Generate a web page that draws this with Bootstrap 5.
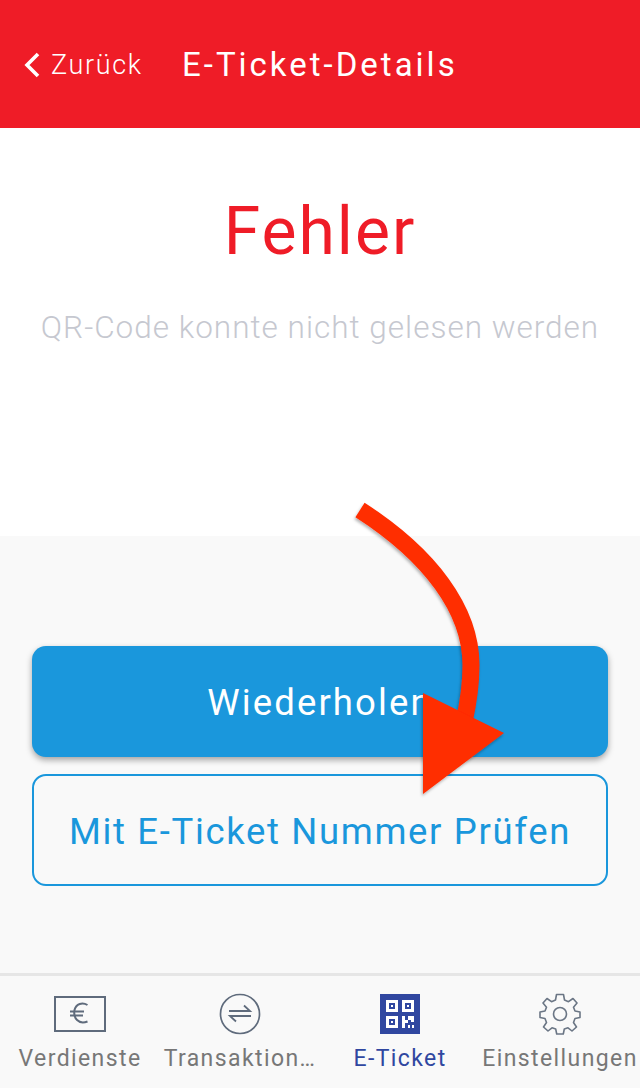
<!DOCTYPE html>
<html lang="de">
  <head>
    <meta charset="UTF-8" />
    <meta name="viewport" content="width=device-width, initial-scale=1.0" />
    <title>E-Ticket-Details</title>
    <link href="https://cdn.jsdelivr.net/npm/bootstrap@5.3.0/dist/css/bootstrap.min.css" rel="stylesheet" />
    <style>
      html, body { height: 100%; }
      body { font-family: Roboto, "Liberation Sans", sans-serif; background: #fff; overflow: hidden; }
      .app-screen { width: 640px; height: 1088px; }
      .top-bar { height: 128px; background: #ef1c27; color: #fff; padding-left: 23px; padding-top: 2px; }
      .back-link { font-size: 27px; letter-spacing: 1.65px; color: #fff; text-decoration: none; width: 159px; font-weight: 300; gap: 9px; }
      .bar-title { font-size: 33px; letter-spacing: 3px; font-weight: 400; }
      .msg-area { height: 408px; padding-top: 66px; }
      .msg-title { font-size: 66px; font-weight: 400; color: #ef1c27; letter-spacing: 2px; line-height: 76px; margin: 0; }
      .msg-text { font-size: 31.5px; color: #c6c8d0; letter-spacing: 1px; font-weight: 300; margin: 38px 0 0; line-height: 40px; }
      .action-area { height: 437px; background: #f9f9f9; padding: 110px 32px 0; }
      .btn-retry, .btn-number { width: 100%; font-size: 36.5px; border-radius: 14px; font-weight: 400; padding-top: 10px; }
      .btn-retry { height: 111px; background: #1a97dc; border: 0; color: #fff; letter-spacing: 2.1px; box-shadow: 0 3px 6px rgba(0,0,0,.35); }
      .btn-number { height: 112px; background: transparent; border: 2px solid #1a97dc; color: #1a97dc; letter-spacing: 1.65px; margin-top: 17px; }
      .tab-strip { height: 115px; background: #f9f9f9; border-top: 3px solid #e6e6e6; }
      .tab-cell { width: 160px; height: 100%; padding-top: 17px; color: #777; font-size: 23px; letter-spacing: 1.4px; white-space: nowrap; }
      .tab-cell.active { color: #3047a0; }
      .tab-ico { display: block; height: 42px; margin-bottom: 9px; }
      .tab-name { line-height: 30px; }
      .arrow-mark { position: absolute; left: 0; top: 0; pointer-events: none; }
    </style>
  </head>
  <body>
    <div class="app-screen position-relative d-flex flex-column">
      <div class="top-bar d-flex align-items-center">
        <a href="#" class="back-link d-flex align-items-center">
          <svg width="19" height="26" viewBox="0 0 19 26"><path d="M15 2 L4 13 L15 24" fill="none" stroke="#fff" stroke-width="3.6" /></svg>
          <span>Zurück</span>
        </a>
        <div class="bar-title">E-Ticket-Details</div>
      </div>

      <div class="msg-area text-center">
        <h1 class="msg-title">Fehler</h1>
        <p class="msg-text">QR-Code konnte nicht gelesen werden</p>
      </div>

      <div class="action-area">
        <button type="button" class="btn btn-retry">Wiederholen</button>
        <button type="button" class="btn btn-number">Mit E-Ticket Nummer Prüfen</button>
      </div>

      <div class="tab-strip d-flex">
        <div class="tab-cell text-center">
          <svg class="tab-ico mx-auto" width="52" height="42" viewBox="0 0 52 42">
            <rect x="1" y="4" width="50" height="34" fill="none" stroke="#5f6b7c" stroke-width="2" />
            <path d="M33.5 12 C28.5 9 22 10.5 20.5 17 C19 25 24.5 32 33.5 28.5 M16 18.5 H30 M16 22.5 H29" fill="none" stroke="#5f6b7c" stroke-width="2" />
          </svg>
          <div class="tab-name">Verdienste</div>
        </div>
        <div class="tab-cell text-center">
          <svg class="tab-ico mx-auto" width="42" height="42" viewBox="0 0 42 42">
            <circle cx="21" cy="21" r="19.5" fill="none" stroke="#5f6b7c" stroke-width="1.7" />
            <path d="M10 18 H31 L25 12.5 M32 23 H11 L17 28.5" fill="none" stroke="#5f6b7c" stroke-width="1.8" />
          </svg>
          <div class="tab-name">Transaktion…</div>
        </div>
        <div class="tab-cell active text-center">
          <svg class="tab-ico mx-auto" width="40" height="42" viewBox="0 0 40 42">
            <rect y="1" width="40" height="40" fill="#3047a0" />
            <path fill-rule="evenodd" fill="#fff" d="M6 7 H18 V19 H6 Z M9 10 V16 H15 V10 Z M22 7 H34 V19 H22 Z M25 10 V16 H31 V10 Z M6 23 H18 V35 H6 Z M9 26 V32 H15 V26 Z M22 23 H25 V27 H28 V23 H34 V29 H31 V27 H28 V30 H25 V35 H22 Z M28 32 H30 V35 H28 Z M32 32 H34 V35 H32 Z" />
            <path fill="#fff" d="M11 12 H13 V14 H11 Z M27 12 H29 V14 H27 Z M11 28 H13 V30 H11 Z" />
          </svg>
          <div class="tab-name">E-Ticket</div>
        </div>
        <div class="tab-cell text-center">
          <svg class="tab-ico mx-auto" width="42" height="42" viewBox="0 0 42 42">
            <path fill="none" stroke="#6b7685" stroke-width="1.6" stroke-linejoin="round" d="M17.5 1.5 H24.5 L25.5 7 L29.5 8.7 L34 5.5 L38 10 L34.5 14.2 L36 18 L41 19 V24.5 L36 25.5 L34.5 29.5 L37.5 34 L33 38 L29 34.8 L25.3 36 L24.3 41 H17.7 L16.7 36 L13 34.8 L9 38 L4.5 34 L7.5 29.5 L6 25.5 L1 24.5 V19 L6 18 L7.5 14.2 L4 10 L8 5.5 L12.5 8.7 L16.5 7 Z" />
            <circle cx="21" cy="21" r="6.5" fill="none" stroke="#6b7685" stroke-width="1.6" />
          </svg>
          <div class="tab-name">Einstellungen</div>
        </div>
      </div>

      <!-- Markierung liegt über den Buttons -->
      <svg class="arrow-mark" width="640" height="1088" viewBox="0 0 640 1088">
        <defs>
          <filter id="arrowShadow" x="-20%" y="-20%" width="140%" height="140%">
            <feDropShadow dx="-1" dy="2" stdDeviation="1.5" flood-color="#000" flood-opacity=".3" />
          </filter>
        </defs>
        <g filter="url(#arrowShadow)" fill="#ff2d00">
          <path d="M360 510 C430 555 471 610 471 665 C471 685 469 700 464 722" fill="none" stroke="#ff2d00" stroke-width="17" />
          <path d="M423 693 L504 733 L423 794 Z" />
        </g>
      </svg>
    </div>

    <script src="https://cdn.jsdelivr.net/npm/bootstrap@5.3.0/dist/js/bootstrap.bundle.min.js"></script>
  </body>
</html>
